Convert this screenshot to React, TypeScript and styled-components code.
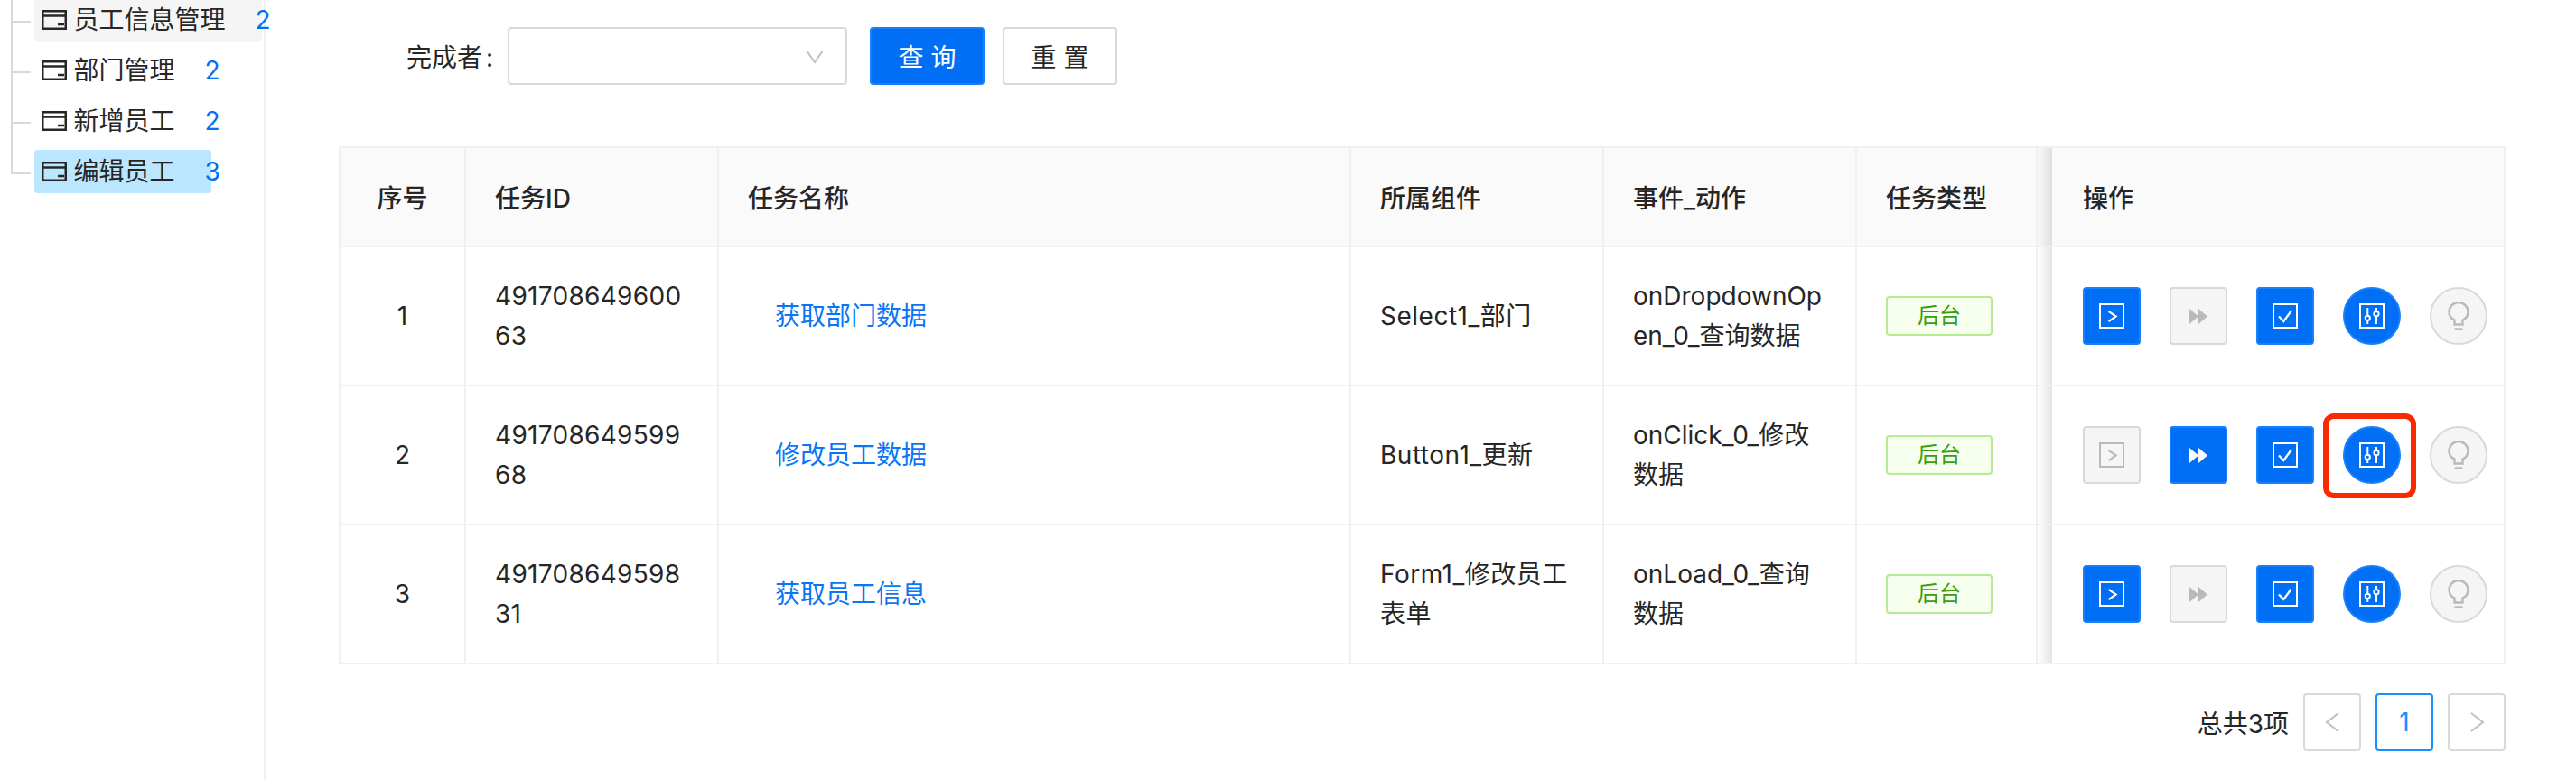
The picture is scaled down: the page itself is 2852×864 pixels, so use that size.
import React from "react";
import styled, { createGlobalStyle } from "styled-components";

const Global = createGlobalStyle`
  html, body { margin: 0; padding: 0; background: #fff; overflow: hidden; }
  body { font-family: Inter, "Noto Sans CJK SC", sans-serif; font-size: 28px; color: #262626; }
  * { box-sizing: border-box; }
`;

const Page = styled.div`
  display: flex;
  height: 864px;
  overflow: hidden;
`;

const Sidebar = styled.aside`
  width: 294px;
  flex: none;
  border-right: 2px solid #f0f0f0;
`;

const Tree = styled.ul`
  position: relative;
  list-style: none;
  margin: -2px 0 0;
  padding: 0 0 0 38px;
  &::before {
    content: "";
    position: absolute;
    left: 12px;
    top: 0;
    width: 2px;
    height: 195px;
    background: #d9d9d9;
  }
`;

const TreeItem = styled.li`
  position: relative;
  margin-bottom: 8px;
  height: 48px;
  &::before {
    content: "";
    position: absolute;
    left: -24px;
    top: 25px;
    width: 20px;
    height: 2px;
    background: #d9d9d9;
  }
`;

const TreeNode = styled.div<{ $tone?: "hover" | "selected" }>`
  display: inline-flex;
  align-items: center;
  height: 48px;
  padding-left: 8px;
  border-radius: 4px;
  background: ${(p) => (p.$tone === "hover" ? "#f5f5f5" : p.$tone === "selected" ? "#bae7ff" : "transparent")};
`;

const NodeIcon = styled.svg`
  width: 28px;
  height: 22px;
  margin-right: 7.5px;
  flex: none;
`;

const NodeName = styled.span`
  line-height: 44px;
`;

const NodeCount = styled.span`
  margin-left: 33px;
  margin-right: -10px;
  color: #0070f5;
  line-height: 44px;
`;

const Main = styled.main`
  flex: 1;
  padding: 30px 78px 0 81px;
`;

const Toolbar = styled.form`
  display: flex;
  align-items: center;
  height: 64px;
  margin-bottom: 68px;
  padding-left: 75px;
`;

const FieldLabel = styled.label`
  flex: none;
  width: 96px;
  margin-right: 16px;
  word-spacing: -4px;
  white-space: nowrap;
`;

const SelectBox = styled.div`
  display: flex;
  align-items: center;
  justify-content: flex-end;
  width: 376px;
  height: 64px;
  padding-right: 24px;
  margin-right: 25px;
  border: 2px solid #d9d9d9;
  border-radius: 4px;
  background: #fff;
`;

const Button = styled.button<{ $primary?: boolean }>`
  width: 127px;
  height: 64px;
  margin-right: 20px;
  padding: 0;
  font: inherit;
  border-radius: 4px;
  border: 2px solid ${(p) => (p.$primary ? "#1a80fa" : "#d9d9d9")};
  background: ${(p) => (p.$primary ? "#006ff5" : "#fff")};
  color: ${(p) => (p.$primary ? "#fff" : "#262626")};
`;

const Table = styled.table`
  width: 2399px;
  table-layout: fixed;
  border-collapse: separate;
  border-spacing: 0;
  border-top: 2px solid #f0f0f0;
`;

const Th = styled.th<{ $center?: boolean }>`
  height: 110px;
  padding: 0 32px;
  background: #fafafa;
  font-weight: 500;
  text-align: ${(p) => (p.$center ? "center" : "left")};
  border-right: 2px solid #f0f0f0;
  border-bottom: 2px solid #f0f0f0;
  &:first-child { border-left: 2px solid #f0f0f0; }
`;

const Td = styled.td<{ $center?: boolean; $spacing?: string }>`
  height: 154px;
  padding: 0 32px;
  line-height: 44px;
  word-break: break-all;
  letter-spacing: ${(p) => p.$spacing ?? "normal"};
  text-align: ${(p) => (p.$center ? "center" : "left")};
  border-right: 2px solid #f0f0f0;
  border-bottom: 2px solid #f0f0f0;
  &:first-child { border-left: 2px solid #f0f0f0; }
`;

const shadow = `
  position: relative;
  padding-left: 50px;
  padding-right: 18px;
  &::before {
    content: "";
    position: absolute;
    top: 0;
    bottom: 0;
    left: 0;
    width: 16px;
    background: linear-gradient(to right, rgba(0,0,0,0), rgba(0,0,0,0.11));
  }
`;

const OpTh = styled(Th)`${shadow}`;
const OpTd = styled(Td)`${shadow}`;

const TaskLink = styled.a`
  padding-left: 30px;
  color: #0a75f5;
`;

const Tag = styled.span`
  display: flex;
  align-items: center;
  justify-content: center;
  width: 118px;
  height: 44px;
  border: 2px solid #b7eb8f;
  border-radius: 4px;
  background: #f6ffed;
  color: #389e0d;
  font-size: 24px;
`;

const Actions = styled.div`
  display: flex;
  gap: 32px;
`;

const ActionButton = styled.div<{ $on: boolean; $round?: boolean }>`
  position: relative;
  display: flex;
  align-items: center;
  justify-content: center;
  width: 64px;
  height: 64px;
  border-radius: ${(p) => (p.$round ? "50%" : "4px")};
  border: 2px solid ${(p) => (p.$on ? "#1a80fa" : "#d9d9d9")};
  background: ${(p) => (p.$on ? "#006ff5" : "#f5f5f5")};
  color: ${(p) => (p.$on ? "#fff" : "#bababa")};
`;

const Highlight = styled.div`
  position: absolute;
  left: -24px;
  right: -19px;
  top: -16px;
  bottom: -18px;
  border: 6px solid #fa2a00;
  border-radius: 12px;
`;

const Pager = styled.nav`
  display: flex;
  align-items: center;
  justify-content: flex-end;
  gap: 16px;
  margin-top: 32px;
`;

const PagerBox = styled.div<{ $current?: boolean }>`
  display: flex;
  align-items: center;
  justify-content: center;
  width: 64px;
  height: 64px;
  border: 2px solid ${(p) => (p.$current ? "#1890ff" : "#d9d9d9")};
  border-radius: 4px;
  color: ${(p) => (p.$current ? "#1890ff" : "#bfbfbf")};
`;

const FolderIcon = () => (
  <NodeIcon viewBox="0 0 28 22" fill="none" stroke="#262626">
    <rect x="1.25" y="1.25" width="25.5" height="19.5" strokeWidth="2.5" />
    <path d="M1 6.5H27" strokeWidth="2.5" />
    <path d="M18 16H25" strokeWidth="2.5" />
  </NodeIcon>
);

const Frame = () => <rect x="1" y="1" width="26" height="26" fill="none" stroke="currentColor" strokeWidth="2" />;

const RunIcon = () => (
  <svg width="28" height="28" viewBox="0 0 28 28">
    <Frame />
    <path d="M10.5 8.8L18.7 14.5L10.5 20.2" fill="none" stroke="currentColor" strokeWidth="2.2" />
  </svg>
);

const SkipIcon = () => (
  <svg width="28" height="28" viewBox="0 0 28 28" fill="currentColor">
    <path d="M4 6L14 14.5L4 23Z" />
    <path d="M14 6L24 14.5L14 23Z" />
  </svg>
);

const CheckIcon = () => (
  <svg width="28" height="28" viewBox="0 0 28 28">
    <Frame />
    <path d="M7 14.5L12.3 20L20.7 8.5" fill="none" stroke="currentColor" strokeWidth="2.3" />
  </svg>
);

const TuneIcon = () => (
  <svg width="28" height="28" viewBox="0 0 28 28">
    <Frame />
    <g fill="none" stroke="currentColor" strokeWidth="2">
      <path d="M9.3 5V13.6M9.3 19V23" />
      <circle cx="9.3" cy="16.3" r="2.6" />
      <path d="M19 5V9M19 14.4V23" />
      <circle cx="19" cy="11.7" r="2.6" />
    </g>
  </svg>
);

const BulbIcon = () => (
  <svg width="28" height="32" viewBox="0 0 28 32" fill="none" stroke="currentColor" strokeWidth="2.4">
    <path d="M9.5 25.5V20.5C6 19 3.5 15.5 3.5 11.5A10.5 10.5 0 0 1 24.5 11.5C24.5 15.5 22 19 18.5 20.5V25.5Z" />
    <path d="M9.5 30.5H18.5" />
  </svg>
);

const Chevron = ({ dir }: { dir: "left" | "right" | "down" }) => {
  const d = dir === "left" ? "M15 2L2 12L15 22" : dir === "right" ? "M2 2L15 12L2 22" : "M1 3L10 16L19 3";
  const size = dir === "down" ? { width: 20, height: 18, viewBox: "0 0 20 18" } : { width: 17, height: 24, viewBox: "0 0 17 24" };
  return (
    <svg {...size} fill="none" stroke="#bfbfbf" strokeWidth="2">
      <path d={d} />
    </svg>
  );
};

const treeRows = [
  { name: "员工信息管理", count: 2, tone: "hover" as const },
  { name: "部门管理", count: 2 },
  { name: "新增员工", count: 2 },
  { name: "编辑员工", count: 3, tone: "selected" as const },
];

const rows = [
  { no: 1, id: "49170864960063", name: "获取部门数据", comp: "Select1_部门", event: "onDropdownOpen_0_查询数据", run: true, skip: false, mark: false },
  { no: 2, id: "49170864959968", name: "修改员工数据", comp: "Button1_更新", event: "onClick_0_修改数据", run: false, skip: true, mark: true },
  { no: 3, id: "49170864959831", name: "获取员工信息", comp: "Form1_修改员工表单", event: "onLoad_0_查询数据", run: true, skip: false, mark: false },
];

export default function App() {
  return (
    <Page>
      <Global />
      <Sidebar>
        <Tree>
          {treeRows.map((r) => (
            <TreeItem key={r.name}>
              <TreeNode $tone={r.tone}>
                <FolderIcon />
                <NodeName>{r.name}</NodeName>
                <NodeCount>{r.count}</NodeCount>
              </TreeNode>
            </TreeItem>
          ))}
        </Tree>
      </Sidebar>
      <Main>
        <Toolbar>
          <FieldLabel>完成者 :</FieldLabel>
          <SelectBox>
            <Chevron dir="down" />
          </SelectBox>
          <Button $primary type="button">查 询</Button>
          <Button type="button">重 置</Button>
        </Toolbar>
        <Table>
          <colgroup>
            <col width="141" />
            <col width="280" />
            <col width="700" />
            <col width="280" />
            <col width="280" />
            <col width="200" />
            <col width="518" />
          </colgroup>
          <thead>
            <tr>
              <Th $center>序号</Th>
              <Th>任务ID</Th>
              <Th>任务名称</Th>
              <Th>所属组件</Th>
              <Th>事件_动作</Th>
              <Th>任务类型</Th>
              <OpTh>操作</OpTh>
            </tr>
          </thead>
          <tbody>
            {rows.map((r) => (
              <tr key={r.no}>
                <Td $center>{r.no}</Td>
                <Td $spacing="0.3px">{r.id}</Td>
                <Td><TaskLink>{r.name}</TaskLink></Td>
                <Td $spacing="0.5px">{r.comp}</Td>
                <Td>{r.event}</Td>
                <Td><Tag>后台</Tag></Td>
                <OpTd>
                  <Actions>
                    <ActionButton $on={r.run}><RunIcon /></ActionButton>
                    <ActionButton $on={r.skip}><SkipIcon /></ActionButton>
                    <ActionButton $on><CheckIcon /></ActionButton>
                    <ActionButton $on $round>
                      <TuneIcon />
                      {r.mark && <Highlight />}
                    </ActionButton>
                    <ActionButton $on={false} $round><BulbIcon /></ActionButton>
                  </Actions>
                </OpTd>
              </tr>
            ))}
          </tbody>
        </Table>
        <Pager>
          <span>总共3项</span>
          <PagerBox><Chevron dir="left" /></PagerBox>
          <PagerBox $current>1</PagerBox>
          <PagerBox><Chevron dir="right" /></PagerBox>
        </Pager>
      </Main>
    </Page>
  );
}
